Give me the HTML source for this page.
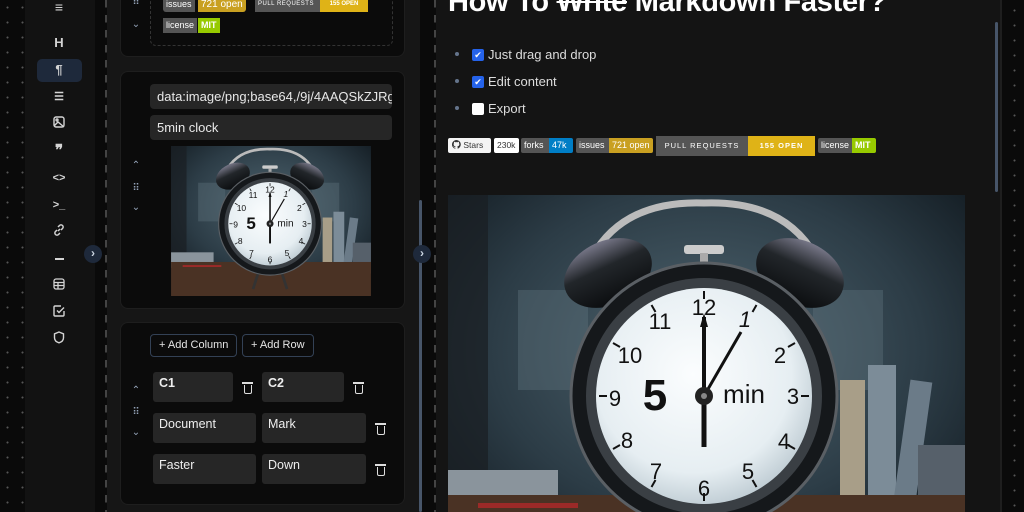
<!DOCTYPE html>
<html><head><meta charset="utf-8"><style>
*{box-sizing:border-box;margin:0;padding:0}
html,body{width:1024px;height:512px;overflow:hidden}
body{background:#0a0a0a;font-family:"Liberation Sans",sans-serif;position:relative;color:#e5e5e5}
.abs{position:absolute}
.dots{background-image:radial-gradient(circle,#555 0.8px,transparent 1.2px);background-size:15px 15px}
.vdots{width:2px;background-image:linear-gradient(#444 50%,transparent 50%);background-size:2px 15px}
.side{left:25px;top:0;width:70px;height:512px;background:#121212}
.ic{position:absolute;left:50px;width:18px;height:18px;color:#d4d4d4;font-size:13px;font-weight:bold;text-align:center;line-height:18px}
.ed{left:107px;top:0;width:313px;height:512px;background:#161616}
.card{position:absolute;left:120px;width:285px;background:#0b0b0b;border:1px solid #1e1e1e;border-radius:8px}
.inp{position:absolute;background:#262626;border-radius:4px;color:#e8e8e8;font-size:13px;padding:0 7px;white-space:nowrap;overflow:hidden}
.handle{position:absolute;left:131px;color:#94a3b8;font-size:10px;width:10px;text-align:center}
.badge{position:absolute;height:15px;font-size:9px;line-height:15px;color:#fff;padding:0 3px;white-space:nowrap}
.btn{position:absolute;border:1px solid #334155;border-radius:4px;height:23px;font-size:11px;line-height:21px;padding:0 8px;color:#e5e5e5;background:#0b0b0b}
.cell{position:absolute;background:#262626;border-radius:3px;font-size:12.5px;color:#eee;padding:4px 6px;height:30px}
.trash{position:absolute;width:8px;height:9px;border:1.5px solid #ddd;border-top:none;border-radius:0 0 2px 2px}
.trash:before{content:"";position:absolute;left:-3px;top:-3px;width:11px;height:1.5px;background:#ddd}
.pv{left:436px;top:0;width:564px;height:512px;background:#141414}
.circ{position:absolute;width:18px;height:18px;border-radius:9px;background:#1e293b;color:#cbd5e1;font-size:12px;line-height:17px;text-align:center;font-weight:bold}
</style></head><body>
<svg width="0" height="0" style="position:absolute">
<defs>
<radialGradient id="bg" cx="50%" cy="40%" r="70%"><stop offset="0" stop-color="#4f6570"/><stop offset=".6" stop-color="#2c3c46"/><stop offset="1" stop-color="#10181e"/></radialGradient>
<radialGradient id="face" cx="45%" cy="40%" r="65%"><stop offset="0" stop-color="#fbfdfe"/><stop offset=".7" stop-color="#e6eef2"/><stop offset="1" stop-color="#b8c6ce"/></radialGradient>
<linearGradient id="bell" x1="0" y1="0" x2="0" y2="1"><stop offset="0" stop-color="#778"/><stop offset=".4" stop-color="#22262a"/><stop offset="1" stop-color="#0a0c0e"/></linearGradient>
<g id="clk">
<rect width="517" height="388" fill="url(#bg)"/>
<rect x="70" y="95" width="70" height="100" fill="#5f737e" opacity=".4"/>
<rect x="365" y="95" width="70" height="100" fill="#5f737e" opacity=".4"/>
<rect x="0" y="0" width="40" height="300" fill="#1a1e22" opacity=".7"/>
<rect x="392" y="185" width="25" height="150" fill="#a89e88"/>
<rect x="420" y="170" width="28" height="165" fill="#7c8c98"/>
<rect x="452" y="185" width="22" height="150" fill="#6b7b88" transform="rotate(8 460 260)"/>
<rect x="470" y="250" width="47" height="80" fill="#56606a"/>
<rect x="0" y="275" width="110" height="40" fill="#8a949c"/>
<rect x="0" y="300" width="517" height="88" fill="#4a3224"/>
<rect x="30" y="308" width="100" height="5" fill="#9b2a28"/>
<path d="M140 70 Q170 5 256 8 Q342 5 372 70" fill="none" stroke="#bbb" stroke-width="7"/>
<rect x="236" y="50" width="40" height="9" rx="3" fill="#ccc"/><rect x="252" y="58" width="8" height="14" fill="#aaa"/>
<ellipse cx="160" cy="78" rx="46" ry="32" fill="url(#bell)" transform="rotate(-25 160 78)"/>
<ellipse cx="352" cy="78" rx="46" ry="32" fill="url(#bell)" transform="rotate(25 352 78)"/>
<path d="M225 330 L212 370 M287 330 L300 370" stroke="#333" stroke-width="7"/>
<circle cx="256" cy="201" r="133" fill="#15181b" stroke="#5a5f64" stroke-width="3"/>
<circle cx="256" cy="201" r="118" fill="#3a3f44"/>
<circle cx="256" cy="201" r="108" fill="url(#face)"/>
<g stroke="#111" stroke-width="2">
<path d="M256 96v8M256 298v8M151 201h8M353 201h8M203.5 110l4 7M308.5 110l-4 7M165 148l7 4M347 148l-7 4M165 254l7-4M347 254l-7-4M203.5 292l4-7M308.5 292l-4-7"/>
</g>
<g font-family="Liberation Sans,sans-serif" font-size="22" fill="#111" text-anchor="middle">
<text x="256" y="120">12</text>
<text x="297" y="132" font-style="italic">1</text>
<text x="332" y="168">2</text>
<text x="345" y="209">3</text>
<text x="336" y="254">4</text>
<text x="300" y="284">5</text>
<text x="256" y="301">6</text>
<text x="208" y="284">7</text>
<text x="179" y="253">8</text>
<text x="167" y="211">9</text>
<text x="182" y="168">10</text>
<text x="212" y="134">11</text>
<text x="207" y="215" font-size="44" font-weight="bold">5</text>
<text x="296" y="208" font-size="26">min</text>
</g>
<path d="M256 201 L256 122" stroke="#111" stroke-width="4"/>
<path d="M252 132 L256 118 L260 132z" fill="#111"/>
<path d="M256 201 L293 137" stroke="#111" stroke-width="3"/>
<path d="M256 201 L256 252" stroke="#111" stroke-width="5"/>
<circle cx="256" cy="201" r="9" fill="#222"/><circle cx="256" cy="201" r="3" fill="#888"/>
</g>
</defs></svg>
<div class="abs dots" style="left:0;top:0;width:25px;height:512px"></div>
<div class="abs dots" style="left:1003px;top:0;width:21px;height:512px;background-position:4px 3px"></div>
<div class="abs side">
 <div class="ic" style="left:25px;top:-2px;font-size:14px">≡</div>
 <div class="ic" style="left:25px;top:34px">H</div>
 <div class="abs" style="left:12px;top:59px;width:45px;height:23px;border-radius:5px;background:#1e293b"></div>
 <div class="ic" style="left:25px;top:61px">¶</div>
 <div class="ic" style="left:25px;top:88px;font-size:11px">☰</div>
 <div class="ic" style="left:25px;top:115px"><svg width="12" height="12" viewBox="0 0 12 12" fill="none" stroke="#d4d4d4" stroke-width="1.4"><rect x="1" y="1" width="10" height="10" rx="2"/><circle cx="4" cy="4" r="1"/><path d="M1 10l4-4 6 5"/></svg></div>
 <div class="ic" style="left:25px;top:142px;font-size:15px">❞</div>
 <div class="ic" style="left:25px;top:169px;font-size:11px">&lt;&gt;</div>
 <div class="ic" style="left:25px;top:196px;font-size:11px">&gt;_</div>
 <div class="ic" style="left:25px;top:223px"><svg width="12" height="12" viewBox="0 0 12 12" fill="none" stroke="#d4d4d4" stroke-width="1.5"><path d="M5 7l2-2M4 6L2.5 7.5a2 2 0 003 3L7 9M8 6l1.5-1.5a2 2 0 00-3-3L5 3"/></svg></div>
 <div class="abs" style="left:30px;top:258px;width:9px;height:1.5px;background:#d4d4d4"></div>
 <div class="ic" style="left:25px;top:277px"><svg width="12" height="12" viewBox="0 0 12 12" fill="none" stroke="#d4d4d4" stroke-width="1.3"><rect x="1" y="1" width="10" height="10" rx="2"/><path d="M1 4.5h10M1 7.5h10M5 4.5v6.5"/></svg></div>
 <div class="ic" style="left:25px;top:304px"><svg width="12" height="12" viewBox="0 0 12 12" fill="none" stroke="#d4d4d4" stroke-width="1.4"><path d="M11 6v4a1 1 0 01-1 1H2a1 1 0 01-1-1V2a1 1 0 011-1h6"/><path d="M4 5.5l2 2 5-5"/></svg></div>
 <div class="ic" style="left:25px;top:331px"><svg width="12" height="13" viewBox="0 0 12 13" fill="none" stroke="#d4d4d4" stroke-width="1.4"><path d="M6 1l4.5 1.8v4c0 2.7-2 4.3-4.5 5-2.5-.7-4.5-2.3-4.5-5v-4z"/></svg></div>
</div>
<div class="abs vdots" style="left:105px;top:0;height:512px"></div>
<div class="abs ed"></div>
<div class="card" style="top:-10px;height:67px">
 <div class="abs" style="left:29px;top:0;width:243px;height:55px;border:1px dashed #333;border-radius:6px"></div>
</div>
<div class="handle" style="top:-3px">⠿</div>
<div class="handle" style="top:19px">⌄</div>
<div class="badge" style="left:163px;top:-3px;background:#555;border-radius:3px 0 0 3px">issues</div>
<div class="badge" style="left:198px;top:-3px;background:#c9a021;border-radius:0 3px 3px 0;font-size:10px">721 open</div>
<div class="badge" style="left:255px;top:-3px;background:#555;font-size:6px;letter-spacing:.5px;width:65px">PULL REQUESTS</div>
<div class="badge" style="left:320px;top:-3px;background:#dfb317;font-size:6px;font-weight:bold;width:48px;text-align:center">155 OPEN</div>
<div class="badge" style="left:163px;top:18px;background:#555">license</div>
<div class="badge" style="left:198px;top:18px;background:#97ca00;font-weight:bold">MIT</div>
<div class="card" style="top:71px;height:238px"></div>
<div class="inp" style="left:150px;top:84px;width:242px;height:25px;line-height:25px">data:image/png;base64,/9j/4AAQSkZJRgABAQ</div>
<div class="inp" style="left:150px;top:115px;width:242px;height:25px;line-height:25px">5min clock</div>
<div class="handle" style="top:160px">⌃</div>
<div class="handle" style="top:183px">⠿</div>
<div class="handle" style="top:202px">⌄</div>
<svg class="abs" style="left:171px;top:146px" width="200" height="150" viewBox="0 0 517 388"><use href="#clk"/></svg>
<div class="card" style="top:322px;height:183px"></div>
<div class="btn" style="left:150px;top:334px">+ Add Column</div>
<div class="btn" style="left:242px;top:334px">+ Add Row</div>
<div class="handle" style="top:385px">⌃</div>
<div class="handle" style="top:407px">⠿</div>
<div class="handle" style="top:427px">⌄</div>
<div class="cell" style="left:153px;top:372px;width:80px;font-weight:bold">C1</div>
<div class="trash" style="left:244px;top:385px"></div>
<div class="cell" style="left:262px;top:372px;width:82px;font-weight:bold">C2</div>
<div class="trash" style="left:355px;top:385px"></div>
<div class="cell" style="left:153px;top:413px;width:103px">Document</div>
<div class="cell" style="left:262px;top:413px;width:104px">Mark</div>
<div class="trash" style="left:377px;top:426px"></div>
<div class="cell" style="left:153px;top:454px;width:103px">Faster</div>
<div class="cell" style="left:262px;top:454px;width:104px">Down</div>
<div class="trash" style="left:377px;top:467px"></div>
<div class="abs" style="left:419px;top:200px;width:3px;height:312px;background:#475569;border-radius:2px"></div>
<div class="abs" style="left:425px;top:0;width:10px;height:512px;background:#0a0a0a"></div>
<div class="abs vdots" style="left:434px;top:0;height:512px"></div>
<div class="circ" style="left:84px;top:245px">›</div>
<div class="circ" style="left:413px;top:245px">›</div>
<div class="abs pv"></div>
<div class="abs" style="left:1000px;top:0;width:2px;height:512px;background:#1e1e1e"></div>
<div class="abs" style="left:995px;top:22px;width:3px;height:170px;background:#475569;border-radius:2px"></div>
<div class="abs" style="left:448px;top:-14px;font-size:29px;font-weight:bold;color:#fff;white-space:nowrap;letter-spacing:-.3px">How To <s>Write</s> Markdown Faster?</div>
<div class="abs" style="left:455px;top:52px;width:4px;height:4px;border-radius:2px;background:#64748b"></div>
<div class="abs" style="left:455px;top:79px;width:4px;height:4px;border-radius:2px;background:#64748b"></div>
<div class="abs" style="left:455px;top:106px;width:4px;height:4px;border-radius:2px;background:#64748b"></div>
<div class="abs" style="left:472px;top:49px;width:12px;height:12px;background:#2563eb;border-radius:2px;color:#fff;font-size:9px;line-height:12px;text-align:center">✔</div>
<div class="abs" style="left:472px;top:76px;width:12px;height:12px;background:#2563eb;border-radius:2px;color:#fff;font-size:9px;line-height:12px;text-align:center">✔</div>
<div class="abs" style="left:472px;top:103px;width:12px;height:12px;background:#fff;border-radius:2px"></div>
<div class="abs" style="left:488px;top:47px;font-size:13px;color:#ddd">Just drag and drop</div>
<div class="abs" style="left:488px;top:74px;font-size:13px;color:#ddd">Edit content</div>
<div class="abs" style="left:488px;top:101px;font-size:13px;color:#ddd">Export</div>
<div class="badge" style="left:448px;top:138px;width:43px;background:#f4f4f4;color:#333;border-radius:2px;font-size:8.5px;padding-left:4px"><svg width="9" height="9" viewBox="0 0 16 16" style="vertical-align:-1px"><path fill="#333" d="M8 0a8 8 0 00-2.5 15.6c.4 0 .5-.2.5-.4v-1.5c-2.2.5-2.7-1-2.7-1-.4-.9-.9-1.2-.9-1.2-.7-.5.1-.5.1-.5.8.1 1.2.8 1.2.8.7 1.3 1.9.9 2.3.7.1-.5.3-.9.5-1.100-1.8-.2-3.6-.9-3.6-4 0-.9.3-1.6.8-2.1-.1-.2-.4-1 .1-2.1 0 0 .7-.2 2.2.8a7.5 7.5 0 014 0c1.5-1 2.2-.8 2.2-.8.4 1.1.2 1.9.1 2.1.5.6.8 1.3.8 2.1 0 3.1-1.9 3.700-3.6 3.9.3.3.5.8.5 1.5v2.2c0 .2.1.5.6.4A8 8 0 008 0z"/></svg> Stars</div>
<div class="badge" style="left:494px;top:138px;width:25px;background:#fff;color:#333;border-radius:2px;font-size:8.5px">230k</div>
<div class="badge" style="left:521px;top:138px;width:28px;background:#555;border-radius:2px 0 0 2px">forks</div>
<div class="badge" style="left:549px;top:138px;width:24px;background:#007ec6;border-radius:0 2px 2px 0">47k</div>
<div class="badge" style="left:576px;top:138px;width:33px;background:#555;border-radius:2px 0 0 2px">issues</div>
<div class="badge" style="left:609px;top:138px;width:44px;background:#c9a021;border-radius:0 2px 2px 0">721 open</div>
<div class="badge" style="left:656px;top:136px;width:92px;height:20px;line-height:20px;background:#555;font-size:7.5px;letter-spacing:1px;text-align:center">PULL REQUESTS</div>
<div class="badge" style="left:748px;top:136px;width:67px;height:20px;line-height:20px;background:#dfb317;font-size:7.5px;letter-spacing:1px;font-weight:bold;text-align:center">155 OPEN</div>
<div class="badge" style="left:818px;top:138px;width:34px;background:#555;border-radius:2px 0 0 2px">license</div>
<div class="badge" style="left:852px;top:138px;width:24px;background:#97ca00;border-radius:0 2px 2px 0;font-weight:bold">MIT</div>
<div class="abs" style="left:448px;top:195px;width:517px;height:317px;overflow:hidden">
<svg width="517" height="388" viewBox="0 0 517 388" style="display:block"><use href="#clk"/></svg>
</div>
</body></html>
